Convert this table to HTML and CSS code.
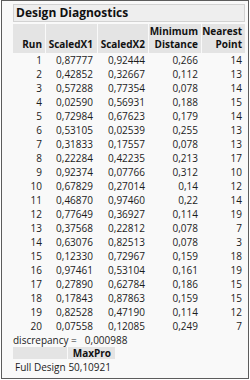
FILE: index.html
```html
<!DOCTYPE html>
<html>
<head>
<meta charset="utf-8">
<link rel="stylesheet" href="styles.css">
</head>
<body>
<div class="frame">
  <div class="title">Design Diagnostics</div>
  <div class="grid">
    <div class="hd">Run</div>
    <div class="hd">ScaledX1</div>
    <div class="hd">ScaledX2</div>
    <div class="hd">Minimum<br>Distance</div>
    <div class="hd">Nearest<br>Point</div>

    <div class="c">1</div><div class="c">0,87777</div><div class="c">0,92444</div><div class="c">0,266</div><div class="c">14</div>
    <div class="c">2</div><div class="c">0,42852</div><div class="c">0,32667</div><div class="c">0,112</div><div class="c">13</div>
    <div class="c">3</div><div class="c">0,57288</div><div class="c">0,77354</div><div class="c">0,078</div><div class="c">14</div>
    <div class="c">4</div><div class="c">0,02590</div><div class="c">0,56931</div><div class="c">0,188</div><div class="c">15</div>
    <div class="c">5</div><div class="c">0,72984</div><div class="c">0,67623</div><div class="c">0,179</div><div class="c">14</div>
    <div class="c">6</div><div class="c">0,53105</div><div class="c">0,02539</div><div class="c">0,255</div><div class="c">13</div>
    <div class="c">7</div><div class="c">0,31833</div><div class="c">0,17557</div><div class="c">0,078</div><div class="c">13</div>
    <div class="c">8</div><div class="c">0,22284</div><div class="c">0,42235</div><div class="c">0,213</div><div class="c">17</div>
    <div class="c">9</div><div class="c">0,92374</div><div class="c">0,07766</div><div class="c">0,312</div><div class="c">10</div>
    <div class="c">10</div><div class="c">0,67829</div><div class="c">0,27014</div><div class="c">0,14</div><div class="c">12</div>
    <div class="c">11</div><div class="c">0,46870</div><div class="c">0,97460</div><div class="c">0,22</div><div class="c">14</div>
    <div class="c">12</div><div class="c">0,77649</div><div class="c">0,36927</div><div class="c">0,114</div><div class="c">19</div>
    <div class="c">13</div><div class="c">0,37568</div><div class="c">0,22812</div><div class="c">0,078</div><div class="c">7</div>
    <div class="c">14</div><div class="c">0,63076</div><div class="c">0,82513</div><div class="c">0,078</div><div class="c">3</div>
    <div class="c">15</div><div class="c">0,12330</div><div class="c">0,72967</div><div class="c">0,159</div><div class="c">18</div>
    <div class="c">16</div><div class="c">0,97461</div><div class="c">0,53104</div><div class="c">0,161</div><div class="c">19</div>
    <div class="c">17</div><div class="c">0,27890</div><div class="c">0,62784</div><div class="c">0,186</div><div class="c">15</div>
    <div class="c">18</div><div class="c">0,17843</div><div class="c">0,87863</div><div class="c">0,159</div><div class="c">15</div>
    <div class="c">19</div><div class="c">0,82528</div><div class="c">0,47190</div><div class="c">0,114</div><div class="c">12</div>
    <div class="c">20</div><div class="c">0,07558</div><div class="c">0,12085</div><div class="c">0,249</div><div class="c">7</div>
  </div>
  <div class="disc"><span class="dl">discrepancy =</span><span class="dv">0,000988</span></div>
  <div class="mp">
    <div class="mph"></div>
    <div class="mph b">MaxPro</div>
    <div class="mpl">Full Design</div>
    <div class="mpv">50,10921</div>
  </div>
</div>
</body>
</html>
```
FILE: styles.css
```css
html, body {
  margin: 0;
  padding: 0;
  background: #ffffff;
}
body {
  font-family: "Open Sans", "Noto Sans", sans-serif;
  color: #1c1c1c;
}
.frame {
  box-sizing: border-box;
  margin-left: 1px;
  width: 248px;
  height: 379px;
  border: 1px solid #5c5c5c;
  background: #f9f9f9;
  padding: 3px 0 0 11px;
}
.title {
  box-sizing: border-box;
  width: 232px;
  height: 18px;
  border: 1px solid #d2d2d2;
  background: #eeeeee;
  font-weight: 700;
  font-size: 12px;
  line-height: 16px;
  padding-left: 2px;
  color: #111;
}
.grid {
  margin-top: 2px;
  width: 232px;
  display: grid;
  grid-template-columns: 32px 51px 50px 52px 43px;
  column-gap: 1px;
  font-size: 10px;
}
.hd {
  background: #e4e4e4;
  height: 29px;
  box-sizing: border-box;
  display: flex;
  align-items: flex-end;
  justify-content: flex-end;
  text-align: right;
  font-weight: 700;
  line-height: 13px;
  padding: 0 3px 2px 0;
  color: #111;
}
.c {
  text-align: right;
  line-height: 14px;
  height: 14px;
  padding-right: 3px;
}
.grid .c:nth-child(5n+2) { padding-right: 4px; }
.grid .hd:nth-child(2) { padding-right: 4px; }
.disc {
  font-size: 10px;
  line-height: 14px;
  height: 14px;
  display: flex;
  gap: 8px;
}
.mp {
  display: grid;
  grid-template-columns: 54px 47px;
  column-gap: 1px;
  width: 102px;
  font-size: 10px;
}
.mph {
  background: #e4e4e4;
  height: 12px;
  line-height: 12px;
  text-align: right;
  padding-right: 3px;
}
.mph.b { font-weight: 700; color: #111; padding-right: 4px; }
.mpl {
  line-height: 16px;
  padding-left: 2px;
}
.mpv {
  line-height: 16px;
  text-align: right;
  padding-right: 4px;
}
```
